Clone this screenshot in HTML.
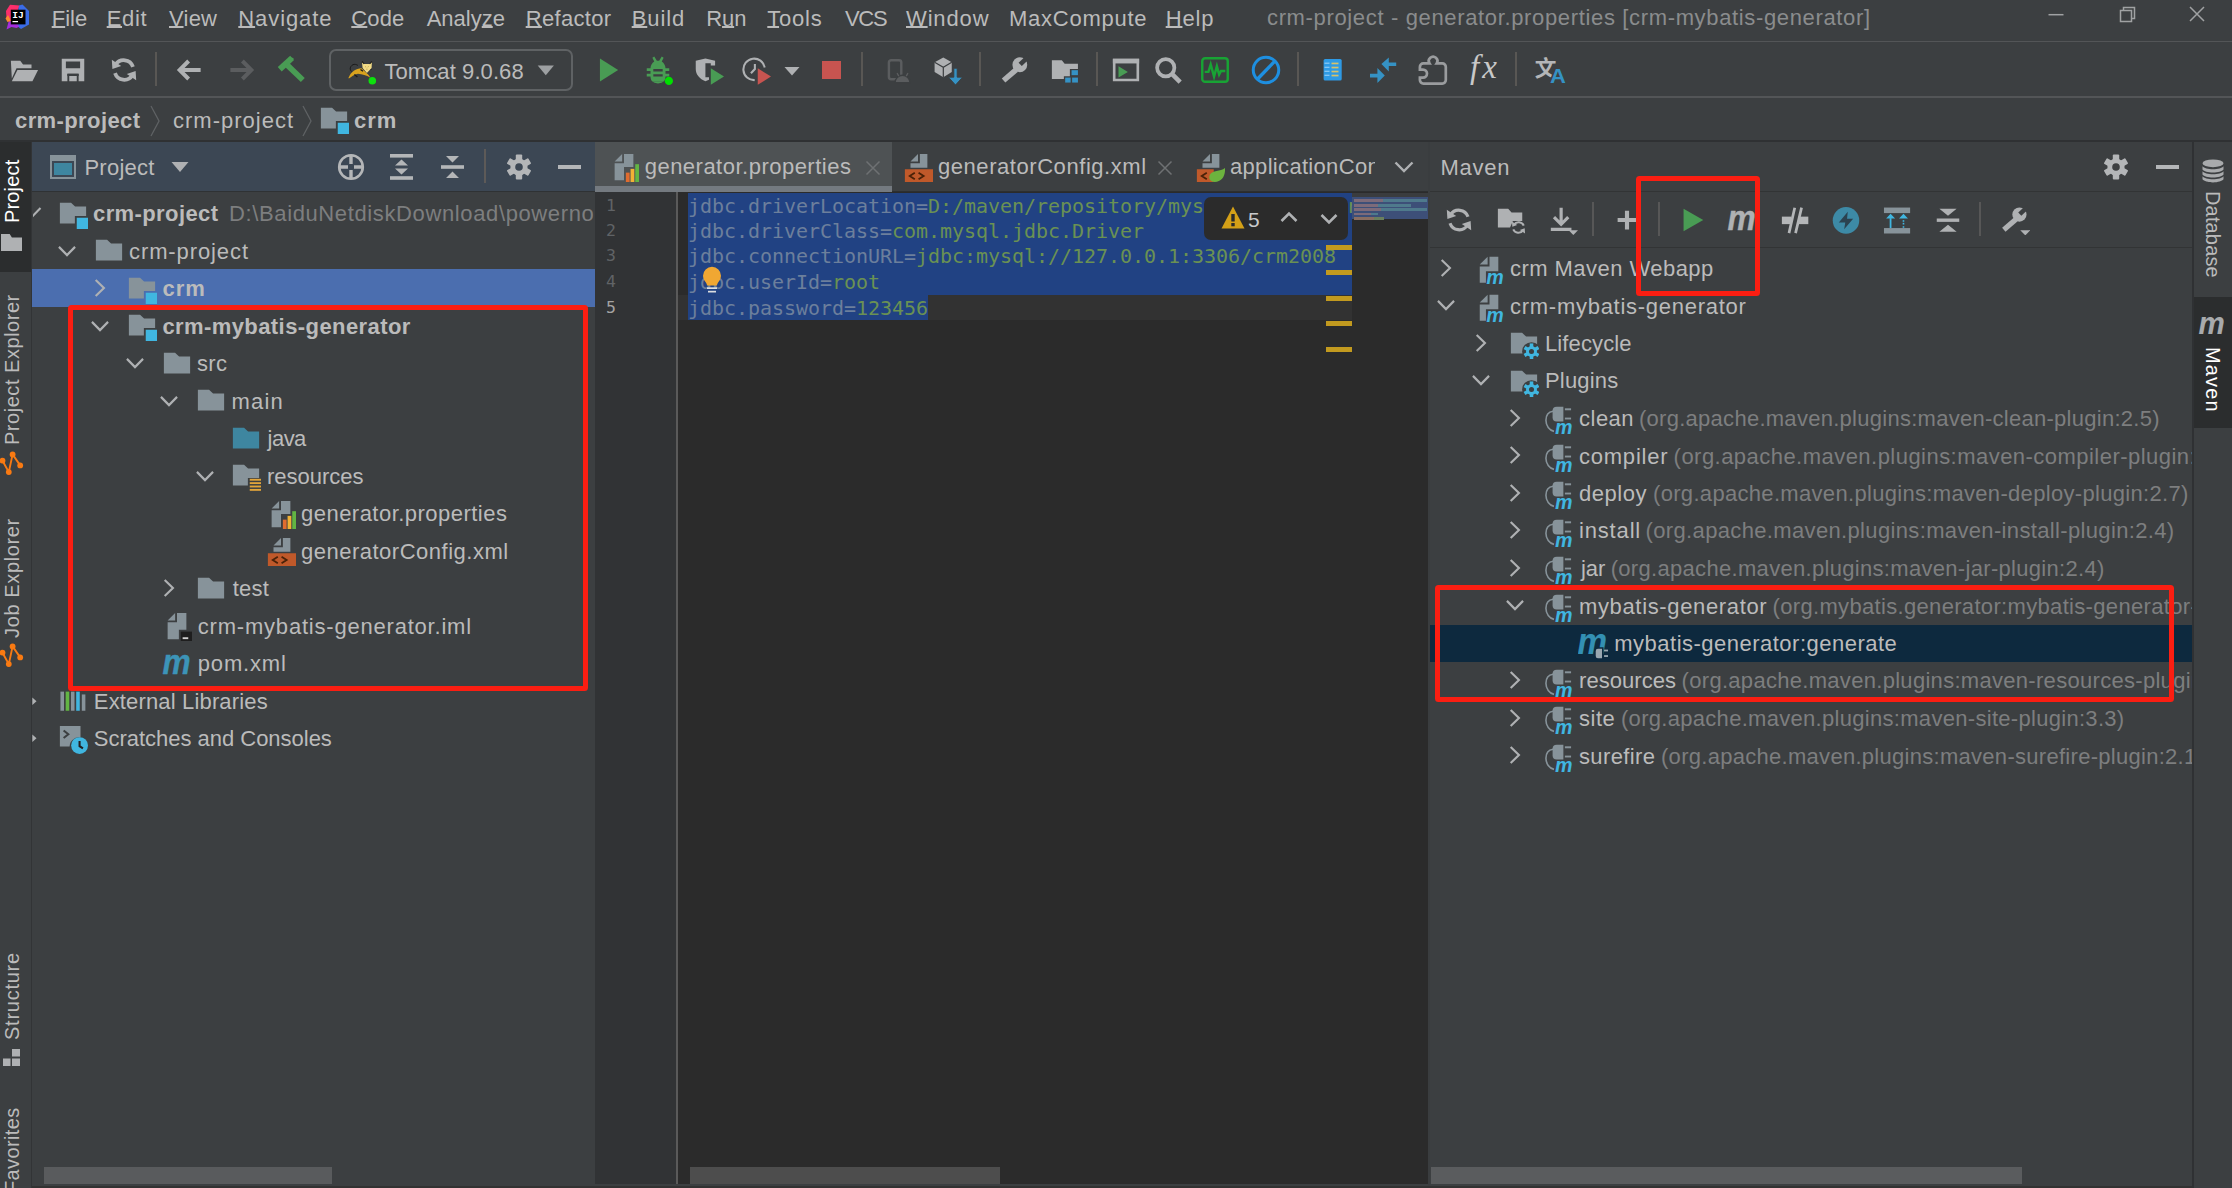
<!DOCTYPE html>
<html lang="en"><head><meta charset="utf-8"><title>crm-project - generator.properties [crm-mybatis-generator]</title><style>
html,body{margin:0;padding:0;background:#3c3f41;}
body{width:2232px;height:1188px;position:relative;overflow:hidden;font-family:"Liberation Sans","Noto Sans CJK SC",sans-serif;}
body>div,body>span,body>svg{position:absolute;}
.t{white-space:pre;line-height:30px;height:30px;}
.code{font-family:"DejaVu Sans Mono","Liberation Mono",monospace;font-size:20px;letter-spacing:-0.04px;transform-origin:0 22px;transform:scaleY(.935);}
.ln{font-family:"DejaVu Sans Mono","Liberation Mono",monospace;font-size:16.200px;transform-origin:0 22px;transform:scale(1.02,.97);}
u{text-decoration:underline;text-underline-offset:0.3px;text-decoration-thickness:1.5px;}
</style></head><body>
<div style="left:0px;top:0px;width:2232px;height:1188px;background:#3c3f41;"></div>
<div style="left:0px;top:40.5px;width:2232px;height:1.5px;background:#535557;"></div>
<div style="left:0px;top:96.3px;width:2232px;height:1.5px;background:#535557;"></div>
<div style="left:0px;top:140px;width:2232px;height:2px;background:#2f3133;"></div>
<svg style="left:5px;top:4px;" width="26" height="26" viewBox="0 0 26 26"><path d="M1 7L5 .800l9.500 .700-3 9-6 9.500-4-6z" fill="#fc2f6b"/><path d="M14 1.500L17.500 .500l6.500 6.500v13.500L16 25l-5-4z" fill="#3a6ce8"/><path d="M.500 14.500L3 11l3 6-3.500 1z" fill="#fb8a2e"/><path d="M3.500 18l5-2 6 6.500-3 1.500-5-1-5 2.500z" fill="#a42ddc"/>
<rect x="5.800" y="5.700" width="14.700" height="14.700" fill="#000"/><rect x="7.500" y="17" width="5.500" height="1.200" fill="#fff"/>
<text x="7.300" y="14.300" font-family="Liberation Mono,monospace" font-weight="bold" font-size="9.500" fill="#fff">IJ</text></svg>
<span id="t1" class="t" style="left:51.70px;top:4px;color:#bbbbbb;font-size:22px;"><u>F</u>ile</span>
<span id="t2" class="t" style="left:106.70px;top:4px;color:#bbbbbb;font-size:22px;letter-spacing:0.667px;"><u>E</u>dit</span>
<span id="t3" class="t" style="left:169.00px;top:4px;color:#bbbbbb;font-size:22px;letter-spacing:0.233px;"><u>V</u>iew</span>
<span id="t4" class="t" style="left:238.30px;top:4px;color:#bbbbbb;font-size:22px;letter-spacing:0.914px;"><u>N</u>avigate</span>
<span id="t5" class="t" style="left:351.30px;top:4px;color:#bbbbbb;font-size:22px;letter-spacing:0.133px;"><u>C</u>ode</span>
<span id="t6" class="t" style="left:426.70px;top:4px;color:#bbbbbb;font-size:22px;">Analy<u>z</u>e</span>
<span id="t7" class="t" style="left:525.70px;top:4px;color:#bbbbbb;font-size:22px;letter-spacing:0.329px;"><u>R</u>efactor</span>
<span id="t8" class="t" style="left:631.70px;top:4px;color:#bbbbbb;font-size:22px;letter-spacing:0.900px;"><u>B</u>uild</span>
<span id="t9" class="t" style="left:706.30px;top:4px;color:#bbbbbb;font-size:22px;letter-spacing:-0.150px;">R<u>u</u>n</span>
<span id="t10" class="t" style="left:767.30px;top:4px;color:#bbbbbb;font-size:22px;letter-spacing:0.750px;"><u>T</u>ools</span>
<span id="t11" class="t" style="left:845.00px;top:4px;color:#bbbbbb;font-size:22px;letter-spacing:-1.300px;">VCS</span>
<span id="t12" class="t" style="left:906.00px;top:4px;color:#bbbbbb;font-size:22px;letter-spacing:0.860px;"><u>W</u>indow</span>
<span id="t13" class="t" style="left:1009.00px;top:4px;color:#bbbbbb;font-size:22px;letter-spacing:0.744px;">MaxCompute</span>
<span id="t14" class="t" style="left:1165.70px;top:4px;color:#bbbbbb;font-size:22px;letter-spacing:0.867px;"><u>H</u>elp</span>
<span id="t15" class="t" style="left:1267.00px;top:3px;color:#8a8c8d;font-size:22px;letter-spacing:0.649px;">crm-project - generator.properties [crm-mybatis-generator]</span>
<svg style="left:2040px;top:0px;" width="180" height="36" viewBox="0 0 180 36"><path d="M8.500 14.700h15" stroke="#a0a2a3" stroke-width="1.500"/>
<path d="M80.500 10.500h11v11h-11zM83.500 10.500v-3h11v11h-3" stroke="#a0a2a3" stroke-width="1.500" fill="none"/>
<path d="M150 7l14 14M164 7l-14 14" stroke="#a0a2a3" stroke-width="1.500"/></svg>
<svg style="left:9.0px;top:55.0px;" width="30" height="30" viewBox="0 0 16 16"><path fill="#afb1b3" d="M1 3h5l1.500 2H12v2H4L1.500 12.500z"/><path fill="#afb1b3" d="M4.500 8H15.500L12.500 14H1.500z"/></svg>
<svg style="left:58.0px;top:55.0px;" width="30" height="30" viewBox="0 0 16 16"><path fill="#afb1b3" d="M2 2h12v12H2zM4.200 3.500v3.500h7.600V3.500zM5 10v4h6v-4z" fill-rule="evenodd"/><rect x="6" y="11.200" width="4" height="2.800" fill="#afb1b3"/><rect x="5" y="10" width="6" height="1.200" fill="#3c3f41"/></svg>
<svg style="left:109.0px;top:55.0px;" width="30" height="30" viewBox="0 0 16 16"><path d="M12.800 6.300A5.200 5.200 0 0 0 3.500 5.200M3.200 9.700A5.200 5.200 0 0 0 12.500 10.800" stroke="#afb1b3" stroke-width="2" fill="none"/><path fill="#afb1b3" d="M1.500 2.500l.3 5 4.700-1.600zM14.500 13.500l-.3-5-4.700 1.600z"/></svg>
<div style="left:155.4px;top:52px;width:2px;height:34px;background:#595754;"></div>
<svg style="left:174.0px;top:55.0px;" width="30" height="30" viewBox="0 0 16 16"><path d="M14.200 8H3M7.800 3.200L3 8l4.800 4.800" stroke="#afb1b3" stroke-width="2.100" fill="none"/></svg>
<svg style="left:227.0px;top:55.0px;" width="30" height="30" viewBox="0 0 16 16"><path d="M1.800 8H13M8.200 3.200L13 8l-4.800 4.800" stroke="#5b5d5f" stroke-width="2.100" fill="none"/></svg>
<svg style="left:276.0px;top:55.0px;" width="30" height="30" viewBox="0 0 16 16"><path d="M2 7.600L8.600 1.500" stroke="#499c54" stroke-width="3.100"/><path d="M6.700 1.200l2.800 .400-1 1.500z" fill="#499c54"/><path d="M5.600 5L14.300 13.300" stroke="#499c54" stroke-width="3"/></svg>
<div style="left:328.500px;top:48.500px;width:240px;height:38px;border:2px solid #5f6264;border-radius:7px;box-sizing:content-box"></div>
<svg style="left:347px;top:54px;" width="34" height="32" viewBox="0 0 34 32"><path d="M1.300 24.300C4 17.500 9 14.600 14.500 14.300L19.500 18.900C21.500 20.500 23.100 22.500 23.100 23.600C19.500 21.200 15.200 20 10.900 19.700C7.300 20.400 3.800 22.900 2.300 24.300z" fill="#d9a31e"/>
<path d="M4.500 17.500C2.500 15.500 2.800 12.500 5.900 10.700C7.500 10 9.500 10.500 10.900 11.400" stroke="#1a1a1a" stroke-width="1" fill="none"/>
<path d="M7.400 20.500l3 2.600M13.500 15.500l2.500 1.800M22.800 14.500l1.500 1.300" stroke="#1a1a1a" stroke-width="1.300" fill="none"/>
<path d="M14.900 7.500L17.400 10H22.400L24.900 7.500L24.600 13.900L19.900 18.900L15.600 13.900z" fill="#f3dc86"/>
<path d="M14.900 7.500L17.200 9.800M24.900 7.500L22.600 9.800" stroke="#1a1a1a" stroke-width="1.100"/>
<path d="M18 12.500l1.200 .600M21.800 12.500l-1.200 .600M19.900 14.500v1.500" stroke="#b59a45" stroke-width=".700"/>
<circle cx="25.300" cy="26.800" r="3.800" fill="#0de00d"/></svg>
<span id="t16" class="t" style="left:384.40px;top:57px;color:#bbbbbb;font-size:22px;letter-spacing:0.092px;">Tomcat 9.0.68</span>
<svg style="left:536px;top:63px;" width="20" height="14" viewBox="0 0 20 14"><path d="M1.700 2.400h16.200L9.800 12.200z" fill="#9da0a2"/></svg>
<svg style="left:592.5px;top:55.0px;" width="30" height="30" viewBox="0 0 16 16"><path fill="#499c54" d="M3.700 1.800L13.400 8L3.700 14.100z"/></svg>
<svg style="left:643.0px;top:55.0px;" width="30" height="30" viewBox="0 0 16 16"><path fill="#499c54" d="M5 1.500l1-.7L7.400 3h1.200L10 .8l1 .7-1 1.900c1.200.8 2 2.100 2 3.600H14v1.500h-2v1.500h2V11.500h-2c0 1-.3 1.800-.8 2.500H4.800C4.300 13.300 4 12.500 4 11.500H2V10h2V8.500H2V7h2c0-1.500.8-2.800 2-3.600zM5.500 7.500v1.300h5V7.500zM5.500 10.200v1.300h5v-1.300z" fill-rule="evenodd"/><path fill="#499c54" d="M4.800 14a3.800 2.500 0 0 0 6.400 0z"/><circle cx="13.800" cy="13.800" r="2.200" fill="#00e000"/></svg>
<svg style="left:694.0px;top:55.0px;" width="30" height="30" viewBox="0 0 16 16"><path fill="#afb1b3" d="M.930 3.070L6.090 1.920L11.250 3.070V5.550H8.950V4.400H6.090V11.860H8V13.200L6.090 14C3 12.800 .930 10.500 .930 7.500z"/><path fill="#499c54" d="M8.950 7.100L16 11.500L8.950 15.900z"/></svg>
<svg style="left:741.0px;top:55.0px;" width="30" height="30" viewBox="0 0 16 16"><path d="M12.650 6.650A5.730 5.730 0 1 0 7.300 13.380" stroke="#afb1b3" stroke-width="1.100" fill="none"/><path d="M7.400 4.800V7.460L5.300 9.750" stroke="#afb1b3" stroke-width="1.100" fill="none"/><path fill="#c75450" d="M8.930 7.100L16 11.500L8.930 15.900z"/></svg>
<svg style="left:784px;top:66px;" width="16" height="10" viewBox="0 0 16 10"><path d="M.500 1h15L8 9.500z" fill="#afb1b3"/></svg>
<div style="left:821.5px;top:60.6px;width:19px;height:18.8px;background:#c75450;"></div>
<div style="left:861.4px;top:52px;width:2px;height:34px;background:#595754;"></div>
<svg style="left:883.0px;top:55.0px;" width="30" height="30" viewBox="0 0 16 16"><rect x="3.150" y="2.750" width="6.600" height="10.200" rx="1.200" stroke="#5b5d5f" stroke-width="1.300" fill="none"/><path fill="#5b5d5f" stroke="#3c3f41" stroke-width=".700" d="M6.400 14.800a4 4 0 0 1 8 0z"/><path d="M7.500 9.700l.900 1.600M13.300 9.700l-.900 1.600" stroke="#5b5d5f" stroke-width=".700"/></svg>
<svg style="left:933.0px;top:55.0px;" width="30" height="30" viewBox="0 0 16 16"><path fill="#afb1b3" d="M5.500 1.280L10 3.900V9.100L5.500 11.800L.850 9.100V3.900z"/><path d="M.850 3.900L5.500 6.500L10 3.900M5.500 6.500V11.800" stroke="#3c3f41" stroke-width=".650" fill="none"/><path d="M11.100 7.040H12.900V11.800H15.800L12 16L8.200 11.800H11.100z" fill="#3592c4" stroke="#3c3f41" stroke-width=".500"/></svg>
<div style="left:979.4px;top:52px;width:2px;height:34px;background:#595754;"></div>
<svg style="left:999.0px;top:55.0px;" width="30" height="30" viewBox="0 0 16 16"><path d="M2.430 13.630L9.200 7.800" stroke="#afb1b3" stroke-width="2.900"/><circle cx="11.100" cy="5.200" r="3.950" fill="#afb1b3"/><path d="M11.300 5L15.800 .800" stroke="#3c3f41" stroke-width="2.500"/></svg>
<svg style="left:1050.0px;top:55.0px;" width="30" height="30" viewBox="0 0 16 16"><path fill="#afb1b3" d="M1 2.850H6.300L7.800 4.700H14.900V7.400H10.600V11.300H7.400V12.850H1z"/><g fill="#3592c4"><rect x="11.500" y="8.100" width="3.400" height="2.650"/><rect x="8.100" y="12.050" width="2.900" height="2.650"/><rect x="11.800" y="12.050" width="3.100" height="2.650"/></g></svg>
<div style="left:1096.4px;top:52px;width:2px;height:34px;background:#595754;"></div>
<svg style="left:1111.0px;top:55.0px;" width="30" height="30" viewBox="0 0 16 16"><path d="M1.700 2.700h12.600v10.600H1.700z" stroke="#afb1b3" stroke-width="1.400" fill="none"/><rect x="1" y="2" width="14" height="2.500" fill="#afb1b3"/><path fill="#499c54" d="M4 6l5 3-5 3z"/></svg>
<svg style="left:1153.0px;top:55.0px;" width="30" height="30" viewBox="0 0 16 16"><circle cx="6.800" cy="6.800" r="4.600" stroke="#afb1b3" stroke-width="2" fill="none"/><path d="M10.200 10.200L14.500 14.500" stroke="#afb1b3" stroke-width="2.400"/></svg>
<svg style="left:1200.0px;top:55.0px;" width="30" height="30" viewBox="0 0 16 16"><rect x="1.200" y="1.700" width="13.600" height="12.600" rx="1.500" stroke="#18a334" stroke-width="1.300" fill="none"/><path d="M2.500 9h2l1.200-4 1.800 6.500L9 6l1.200 4.500L11.200 8.500h2.300" stroke="#18a334" stroke-width="1.300" fill="none"/></svg>
<svg style="left:1251.0px;top:55.0px;" width="30" height="30" viewBox="0 0 16 16"><circle cx="8" cy="8" r="6.800" stroke="#1e8fe0" stroke-width="1.600" fill="none"/><path d="M3.500 12.800L12.600 3.400" stroke="#1e8fe0" stroke-width="1.800"/></svg>
<div style="left:1297.4px;top:52px;width:2px;height:34px;background:#595754;"></div>
<svg style="left:1322px;top:58px;" width="22" height="24" viewBox="0 0 22 24"><rect x="1.600" y="1.100" width="18.100" height="21.500" rx="1.500" fill="#2e9ae5"/><g fill="#d8c26a"><rect x="9.500" y="4.600" width="7" height="1.700"/><rect x="9.500" y="8.700" width="7" height="1.700"/><rect x="9.500" y="12.700" width="7" height="1.700"/><rect x="9.500" y="16.700" width="7" height="1.700"/></g><g fill="#8ecbf5"><rect x="2.500" y="4.600" width="5" height="1.200"/><rect x="2.500" y="8.700" width="5" height="1.200"/><rect x="2.500" y="12.700" width="5" height="1.200"/><rect x="2.500" y="16.700" width="5" height="1.200"/></g></svg>
<svg style="left:1367px;top:55px;" width="32" height="30" viewBox="0 0 32 30"><path d="M14.400 9.100L21.800 2.400V7.400H29.200V11.100H21.800V16.500z" fill="#3592c4"/><path d="M17.800 20.500L10.400 13.100V18.800H3V22.500H10.400V27.900z" fill="#3592c4"/></svg>
<svg style="left:1416px;top:53px;" width="34" height="33" viewBox="0 0 34 33"><path d="M7.400 10.400H13.500A4.300 4.300 0 1 1 20.700 10.400H26.300A3.500 3.500 0 0 1 29.800 13.900V27.100A3.500 3.500 0 0 1 26.300 30.600H7.400A3.500 3.500 0 0 1 3.900 27.100V24.600H7A4 4 0 1 0 7 16.600H3.900V13.900A3.500 3.500 0 0 1 7.400 10.400z" stroke="#9a9c9e" stroke-width="2.700" fill="none"/></svg>
<span id="t17" class="t" style="left:1470.00px;top:52px;color:#c8c8c8;font-size:33px;font-family:&quot;Liberation Serif&quot;,serif;font-style:italic;letter-spacing:3.000px;">fx</span>
<div style="left:1515.4px;top:52px;width:2px;height:34px;background:#595754;"></div>
<span id="t18" class="t" style="left:1534.70px;top:52px;color:#b4b6b8;font-size:21.7px;font-family:&quot;Noto Sans CJK SC&quot;,sans-serif;font-weight:bold;">文</span>
<span id="t19" class="t" style="left:1550.00px;top:61px;color:#3592c4;font-size:20px;font-weight:bold;transform:scaleX(1.100);transform-origin:0 0;text-shadow:1.500px 0 #3c3f41,-1.500px 0 #3c3f41,0 -1.500px #3c3f41,1px -1px #3c3f41,-1px -1px #3c3f41;">A</span>
<span id="t20" class="t" style="left:15.00px;top:106px;color:#bbbbbb;font-size:22px;font-weight:bold;letter-spacing:0.400px;">crm-project</span>
<svg style="left:148px;top:104px;" width="16" height="34" viewBox="0 0 16 34"><path d="M3 2l8 15-8 15" stroke="#5f6264" stroke-width="1.300" fill="none"/></svg>
<span id="t21" class="t" style="left:173.00px;top:106px;color:#bbbbbb;font-size:22px;letter-spacing:1.000px;">crm-project</span>
<svg style="left:300px;top:104px;" width="16" height="34" viewBox="0 0 16 34"><path d="M3 2l8 15-8 15" stroke="#5f6264" stroke-width="1.300" fill="none"/></svg>
<svg style="left:318.7px;top:104.2px;" width="30" height="30" viewBox="0 0 16 16"><path fill="#87939a" d="M1 2h5.97l2.14 2H15v5H9v4H1z"/><rect x="10" y="10" width="6" height="6" fill="#40b6e0"/></svg>
<span id="t22" class="t" style="left:354.00px;top:106px;color:#bbbbbb;font-size:22px;font-weight:bold;letter-spacing:1.000px;">crm</span>
<div style="left:0px;top:142px;width:31.5px;height:130px;background:#2b2d2e;"></div>
<div style="left:31px;top:142px;width:1px;height:1046px;background:#323436;"></div>
<span id="t23" class="t" style="left:-3.0px;top:223.00px;transform-origin:0 0;transform:rotate(-90deg);color:#ffffff;font-size:20px;letter-spacing:0.167px;">Project</span>
<svg style="left:1.3px;top:233.7px;" width="21" height="17" viewBox="0 0 21 17"><path fill="#afb1b3" d="M0 0h8.700l2.200 3.500H21V17H0z"/></svg>
<span id="t24" class="t" style="left:-3.0px;top:445.00px;transform-origin:0 0;transform:rotate(-90deg);color:#bbbbbb;font-size:20px;letter-spacing:0.533px;">Project Explorer</span>
<svg style="left:0px;top:440px;" width="26" height="40" viewBox="0 0 26 40"><path d="M2.5 20.7 L8.8 32.1 L12.6 14.4 L20.2 25.4" stroke="#f97a12" stroke-width="1.900" fill="none"/><circle cx="2.5" cy="20.7" r="2.900" fill="#f97a12"/><circle cx="8.8" cy="32.1" r="2.900" fill="#f97a12"/><circle cx="12.6" cy="14.4" r="2.900" fill="#f97a12"/><circle cx="20.2" cy="25.4" r="2.900" fill="#f97a12"/></svg>
<span id="t25" class="t" style="left:-3.0px;top:638.00px;transform-origin:0 0;transform:rotate(-90deg);color:#bbbbbb;font-size:20px;letter-spacing:0.636px;">Job Explorer</span>
<svg style="left:0px;top:632.3px;" width="26" height="40" viewBox="0 0 26 40"><path d="M2.5 20.7 L8.8 32.1 L12.6 14.4 L20.2 25.4" stroke="#f97a12" stroke-width="1.900" fill="none"/><circle cx="2.5" cy="20.7" r="2.900" fill="#f97a12"/><circle cx="8.8" cy="32.1" r="2.900" fill="#f97a12"/><circle cx="12.6" cy="14.4" r="2.900" fill="#f97a12"/><circle cx="20.2" cy="25.4" r="2.900" fill="#f97a12"/></svg>
<span id="t26" class="t" style="left:-3.0px;top:1040.00px;transform-origin:0 0;transform:rotate(-90deg);color:#bbbbbb;font-size:20px;letter-spacing:0.750px;">Structure</span>
<svg style="left:3px;top:1049px;" width="18" height="18" viewBox="0 0 18 18"><rect x="9" y="0" width="8" height="7.500" fill="#afb1b3"/><rect x="0" y="9.500" width="7.500" height="7.500" fill="#afb1b3"/><rect x="9" y="9.500" width="8" height="7.500" fill="#afb1b3"/></svg>
<span id="t27" class="t" style="left:-3.0px;top:1193.00px;transform-origin:0 0;transform:rotate(-90deg);color:#bbbbbb;font-size:20px;letter-spacing:0.375px;">Favorites</span>
<div style="left:32px;top:142px;width:563px;height:49px;background:#3c4754;"></div>
<div style="left:32px;top:190.5px;width:563px;height:1.5px;background:#2f3234;"></div>
<svg style="left:50px;top:155px;" width="26" height="24" viewBox="0 0 26 24"><rect x="0" y="0" width="26" height="24" fill="#87939a"/><rect x="2" y="6" width="22" height="16" fill="#3c4754"/><rect x="4" y="8" width="18" height="12" fill="#3e86a0"/></svg>
<span id="t28" class="t" style="left:84.40px;top:153px;color:#bbbbbb;font-size:22px;letter-spacing:0.267px;">Project</span>
<svg style="left:171px;top:161px;" width="18" height="12" viewBox="0 0 18 12"><path d="M.500 1h17L9 11z" fill="#afb1b3"/></svg>
<svg style="left:337px;top:153px;" width="28" height="28" viewBox="0 0 28 28"><circle cx="14" cy="14" r="11.800" stroke="#b4b6b8" stroke-width="2.600" fill="none"/><path d="M14 3v8M14 17v8M3 14h8M17 14h8" stroke="#b4b6b8" stroke-width="3.400"/></svg>
<svg style="left:390px;top:153px;" width="24" height="28" viewBox="0 0 24 28"><rect x="0" y="1" width="23" height="3.600" fill="#b4b6b8"/><rect x="0" y="23.200" width="23" height="3.600" fill="#b4b6b8"/><path d="M5 12.500h13L11.500 6.500zM5 15.500h13L11.500 21.500z" fill="#b4b6b8"/></svg>
<svg style="left:441px;top:153px;" width="24" height="28" viewBox="0 0 24 28"><rect x="0" y="12.200" width="23" height="3.600" fill="#b4b6b8"/><path d="M5 3h13L11.500 9.500zM5 25h13L11.500 18.500z" fill="#b4b6b8"/></svg>
<div style="left:484px;top:149px;width:1.5px;height:34px;background:#5d5a58;"></div>
<svg style="left:505px;top:153px;" width="28" height="28" viewBox="0 0 28 28"><g transform="translate(14 14)"><g fill="#b4b6b8"><circle r="8.600"/><rect x="-3.200" y="-12.400" width="6.400" height="7" rx="1" transform="rotate(0)"/><rect x="-3.200" y="-12.400" width="6.400" height="7" rx="1" transform="rotate(60)"/><rect x="-3.200" y="-12.400" width="6.400" height="7" rx="1" transform="rotate(120)"/><rect x="-3.200" y="-12.400" width="6.400" height="7" rx="1" transform="rotate(180)"/><rect x="-3.200" y="-12.400" width="6.400" height="7" rx="1" transform="rotate(240)"/><rect x="-3.200" y="-12.400" width="6.400" height="7" rx="1" transform="rotate(300)"/></g><circle r="3.800" fill="#3c4754"/></g></svg>
<div style="left:558px;top:164.8px;width:23px;height:4px;background:#b4b6b8;"></div>
<div style="left:32px;top:269px;width:563px;height:37.5px;background:#4b6eaf;"></div>
<svg style="left:33px;top:205px;" width="10" height="14" viewBox="0 0 10 14"><path d="M-1 11.800L7.500 3" stroke="#afb1b3" stroke-width="2.100" fill="none"/></svg>
<svg style="left:57.5px;top:198.65px;" width="30" height="30" viewBox="0 0 16 16"><path fill="#87939a" d="M1 2h5.97l2.14 2H15v5H9v4H1z"/><rect x="10" y="10" width="6" height="6" fill="#40b6e0"/></svg>
<span id="t29" class="t" style="left:93.00px;top:199px;color:#bbbbbb;font-size:22px;font-weight:bold;letter-spacing:0.400px;">crm-project</span>
<span id="t30" class="t" style="left:229.00px;top:199px;color:#7d7e7f;font-size:22px;width:365px;overflow:hidden;letter-spacing:0.623px;">D:\BaiduNetdiskDownload\powernode\crm</span>
<svg style="left:93.5px;top:236.15px;" width="30" height="30" viewBox="0 0 16 16"><path fill="#87939a" d="M1 2h5.97l2.14 2H15v9H1z"/></svg>
<svg style="left:51.5px;top:235.75px;" width="30" height="30" viewBox="0 0 16 16"><path d="M3.700 5.800l4.300 4.400 4.300-4.400" stroke="#afb1b3" stroke-width="1.150" fill="none"/></svg>
<span id="t31" class="t" style="left:129.00px;top:237px;color:#bbbbbb;font-size:22px;letter-spacing:0.900px;">crm-project</span>
<svg style="left:126.9px;top:273.65px;" width="30" height="30" viewBox="0 0 16 16"><path fill="#87939a" d="M1 2h5.97l2.14 2H15v5H9v4H1z"/><rect x="10" y="10" width="6" height="6" fill="#40b6e0"/></svg>
<svg style="left:84.9px;top:273.25px;" width="30" height="30" viewBox="0 0 16 16"><path d="M5.700 3.700l4.400 4.300-4.400 4.300" stroke="#afb1b3" stroke-width="1.150" fill="none"/></svg>
<span id="t32" class="t" style="left:162.40px;top:274px;color:#bbbbbb;font-size:22px;font-weight:bold;letter-spacing:1.050px;">crm</span>
<svg style="left:126.9px;top:311.15px;" width="30" height="30" viewBox="0 0 16 16"><path fill="#87939a" d="M1 2h5.97l2.14 2H15v5H9v4H1z"/><rect x="10" y="10" width="6" height="6" fill="#40b6e0"/></svg>
<svg style="left:84.9px;top:310.75px;" width="30" height="30" viewBox="0 0 16 16"><path d="M3.700 5.800l4.300 4.400 4.300-4.400" stroke="#afb1b3" stroke-width="1.150" fill="none"/></svg>
<span id="t33" class="t" style="left:162.40px;top:312px;color:#bbbbbb;font-size:22px;font-weight:bold;letter-spacing:0.415px;">crm-mybatis-generator</span>
<svg style="left:161.5px;top:348.65px;" width="30" height="30" viewBox="0 0 16 16"><path fill="#87939a" d="M1 2h5.97l2.14 2H15v9H1z"/></svg>
<svg style="left:119.5px;top:348.25px;" width="30" height="30" viewBox="0 0 16 16"><path d="M3.700 5.800l4.300 4.400 4.300-4.400" stroke="#afb1b3" stroke-width="1.150" fill="none"/></svg>
<span id="t34" class="t" style="left:197.00px;top:349px;color:#bbbbbb;font-size:22px;letter-spacing:0.300px;">src</span>
<svg style="left:196.0px;top:386.15px;" width="30" height="30" viewBox="0 0 16 16"><path fill="#87939a" d="M1 2h5.97l2.14 2H15v9H1z"/></svg>
<svg style="left:154.0px;top:385.75px;" width="30" height="30" viewBox="0 0 16 16"><path d="M3.700 5.800l4.300 4.400 4.300-4.400" stroke="#afb1b3" stroke-width="1.150" fill="none"/></svg>
<span id="t35" class="t" style="left:231.50px;top:387px;color:#bbbbbb;font-size:22px;letter-spacing:1.167px;">main</span>
<svg style="left:231.2px;top:423.65px;" width="30" height="30" viewBox="0 0 16 16"><path fill="#3e86a0" d="M1 2h5.97l2.14 2H15v9H1z"/></svg>
<span id="t36" class="t" style="left:267.60px;top:424px;color:#bbbbbb;font-size:22px;letter-spacing:-0.533px;">java</span>
<svg style="left:231.2px;top:461.15px;" width="30" height="30" viewBox="0 0 16 16"><path fill="#87939a" d="M1 2h5.97l2.14 2H15v5H9v4H1z"/><g fill="#e2a53a"><rect x="10" y="9.500" width="6.200" height="1"/><rect x="10" y="11.300" width="6.200" height="1"/><rect x="10" y="13.100" width="6.200" height="1"/><rect x="10" y="14.900" width="6.200" height="1"/></g></svg>
<svg style="left:189.5px;top:460.75px;" width="30" height="30" viewBox="0 0 16 16"><path d="M3.700 5.800l4.300 4.400 4.300-4.400" stroke="#afb1b3" stroke-width="1.150" fill="none"/></svg>
<span id="t37" class="t" style="left:267.00px;top:462px;color:#bbbbbb;font-size:22px;">resources</span>
<svg style="left:265.5px;top:498.65px;" width="30" height="30" viewBox="0 0 16 16"><path fill="#87939a" d="M7 1L3 5h4z"/><path fill="#87939a" d="M8 1v5H3v9h5V8h5V1z"/><rect x="9" y="11" width="2" height="5" fill="#e06c2f"/><rect x="11.5" y="9" width="2" height="7" fill="#f2b134"/><rect x="14" y="6.5" width="2" height="9.5" fill="#62b543"/></svg>
<span id="t38" class="t" style="left:301.00px;top:499px;color:#bbbbbb;font-size:22px;letter-spacing:0.474px;">generator.properties</span>
<svg style="left:265.5px;top:536.15px;" width="30" height="30" viewBox="0 0 16 16"><path fill="#87939a" d="M8 1L4 5h4z"/><path fill="#87939a" d="M9 1v5H4v2.400h9V1z"/><rect x="1" y="9.200" width="15.100" height="7" fill="#c0592a"/><path d="M6.300 11.100L3.600 12.800l2.700 1.700M8.300 11.100L11 12.800l-2.700 1.700" stroke="#4a2208" stroke-width=".95" fill="none"/></svg>
<span id="t39" class="t" style="left:301.00px;top:537px;color:#bbbbbb;font-size:22px;letter-spacing:0.500px;">generatorConfig.xml</span>
<svg style="left:196.2px;top:573.65px;" width="30" height="30" viewBox="0 0 16 16"><path fill="#87939a" d="M1 2h5.97l2.14 2H15v9H1z"/></svg>
<svg style="left:154.2px;top:573.25px;" width="30" height="30" viewBox="0 0 16 16"><path d="M5.700 3.700l4.400 4.300-4.400 4.300" stroke="#afb1b3" stroke-width="1.150" fill="none"/></svg>
<span id="t40" class="t" style="left:232.70px;top:574px;color:#bbbbbb;font-size:22px;letter-spacing:0.267px;">test</span>
<svg style="left:162.3px;top:611.15px;" width="30" height="30" viewBox="0 0 16 16"><path fill="#87939a" d="M7 1L3 5h4z"/><path fill="#87939a" d="M8 1v5H3v9h6v-5h4V1z"/><rect x="10" y="11" width="6" height="5" fill="#1e1e1e"/><rect x="11" y="14" width="3" height="1" fill="#d0d0d0"/></svg>
<span id="t41" class="t" style="left:197.80px;top:612px;color:#bbbbbb;font-size:22px;letter-spacing:0.792px;">crm-mybatis-generator.iml</span>
<svg style="left:162.3px;top:648.65px;" width="30" height="30" viewBox="0 0 16 16"><g transform="translate(0 0) scale(1)"><text x=".300" y="13.100" font-family="Liberation Sans,sans-serif" font-weight="bold" font-style="italic" font-size="18.300" textLength="15" lengthAdjust="spacingAndGlyphs" fill="#3c94b8" stroke="#3c94b8" stroke-width="0.22">m</text></g></svg>
<span id="t42" class="t" style="left:197.80px;top:649px;color:#bbbbbb;font-size:22px;letter-spacing:0.833px;">pom.xml</span>
<svg style="left:58.3px;top:686.15px;" width="30" height="30" viewBox="0 0 16 16"><rect x="1.300" y="3" width="1.900" height="10.200" fill="#87939a"/><rect x="4.100" y="3" width="1.900" height="10.200" fill="#62b543"/><rect x="6.900" y="3" width="1.900" height="10.200" fill="#87939a"/><rect x="9.700" y="3" width="1.900" height="10.200" fill="#40b6e0"/><rect x="12.700" y="4.500" width="1.900" height="8.700" fill="#87939a"/></svg>
<span id="t43" class="t" style="left:93.80px;top:687px;color:#bbbbbb;font-size:22px;letter-spacing:0.159px;">External Libraries</span>
<svg style="left:58.3px;top:723.65px;" width="30" height="30" viewBox="0 0 16 16"><path fill="#87939a" d="M1 1h11v6.200A5 5 0 0 0 6.200 12H1z"/><path d="M3 3.5l2.500 2L3 7.500" stroke="#3c3f41" stroke-width="1.1" fill="none"/><circle cx="11.500" cy="11.500" r="4.500" fill="#40b6e0"/><path d="M11.500 9v2.800l1.800 1.200" stroke="#231f20" stroke-width="1.1" fill="none"/></svg>
<span id="t44" class="t" style="left:93.80px;top:724px;color:#bbbbbb;font-size:22px;letter-spacing:-0.019px;">Scratches and Consoles</span>
<svg style="left:31.5px;top:696.55px;" width="5" height="9" viewBox="0 0 5 9"><path d="M.300 .500l4.200 3.700-4.200 3.700z" fill="#afb1b3"/></svg>
<svg style="left:31.5px;top:734.05px;" width="5" height="9" viewBox="0 0 5 9"><path d="M.300 .500l4.200 3.700-4.200 3.700z" fill="#afb1b3"/></svg>
<div style="left:68.300px;top:305.200px;width:509.800px;height:375.800px;border:5px solid #fb1e12;border-radius:3.500px;box-sizing:content-box"></div>
<div style="left:44px;top:1167px;width:288px;height:17px;background:#595b5d;"></div>
<div style="left:595px;top:142px;width:833px;height:50px;background:#3c3f41;"></div>
<div style="left:595px;top:142px;width:297px;height:50px;background:#4e5254;"></div>
<div style="left:595px;top:185.9px;width:297px;height:6.9px;background:#747a80;"></div>
<div style="left:892px;top:191.2px;width:536px;height:1.6px;background:#2d2f30;"></div>
<svg style="left:609px;top:152px;" width="30" height="30" viewBox="0 0 16 16"><path fill="#87939a" d="M7 1L3 5h4z"/><path fill="#87939a" d="M8 1v5H3v9h5V8h5V1z"/><rect x="9" y="11" width="2" height="5" fill="#e06c2f"/><rect x="11.5" y="9" width="2" height="7" fill="#f2b134"/><rect x="14" y="6.5" width="2" height="9.5" fill="#62b543"/></svg>
<span id="t45" class="t" style="left:644.70px;top:152px;color:#bbbbbb;font-size:22px;letter-spacing:0.489px;">generator.properties</span>
<svg style="left:865px;top:160px;" width="16" height="16" viewBox="0 0 16 16"><path d="M1.500 1.500l13 13M14.500 1.500l-13 13" stroke="#6e7173" stroke-width="1.500"/></svg>
<svg style="left:903px;top:152px;" width="30" height="30" viewBox="0 0 16 16"><path fill="#87939a" d="M8 1L4 5h4z"/><path fill="#87939a" d="M9 1v5H4v2.400h9V1z"/><rect x="1" y="9.200" width="15.100" height="7" fill="#c0592a"/><path d="M6.300 11.100L3.600 12.800l2.700 1.700M8.300 11.100L11 12.800l-2.700 1.700" stroke="#4a2208" stroke-width=".95" fill="none"/></svg>
<span id="t46" class="t" style="left:938.00px;top:152px;color:#bbbbbb;font-size:22px;letter-spacing:0.556px;">generatorConfig.xml</span>
<svg style="left:1157px;top:160px;" width="16" height="16" viewBox="0 0 16 16"><path d="M1.500 1.500l13 13M14.500 1.500l-13 13" stroke="#6e7173" stroke-width="1.500"/></svg>
<svg style="left:1195px;top:152px;" width="30" height="30" viewBox="0 0 16 16"><path fill="#87939a" d="M8 1L4 5h4z"/><path fill="#87939a" d="M9 1v5H4v2.400h9V1z"/><rect x="1" y="9.200" width="9" height="7" fill="#c0592a"/><path d="M6.300 11.100L3.600 12.800l2.700 1.700" stroke="#4a2208" stroke-width=".95" fill="none"/><path fill="#6cb33e" d="M16 8.5c.3 4-1.5 7.5-5.5 7.5-2.5 0-3.5-2-2.5-4 1.2-2.4 5.5-1.500 8-3.500z"/></svg>
<span id="t47" class="t" style="left:1230.00px;top:152px;color:#bbbbbb;font-size:22px;width:144.500px;overflow:hidden;letter-spacing:0.317px;">applicationContext-datasource.xml</span>
<svg style="left:1394px;top:159px;" width="20" height="16" viewBox="0 0 20 16"><path d="M1.500 3.500l8.500 8.500 8.500-8.500" stroke="#afb1b3" stroke-width="2.400" fill="none"/></svg>
<div style="left:595px;top:192px;width:833px;height:992px;background:#2b2b2b;"></div>
<div style="left:595px;top:192px;width:82px;height:992px;background:#313335;"></div>
<div style="left:676.3px;top:192px;width:1.5px;height:992px;background:#5a5a5a;"></div>
<div style="left:678px;top:294.5px;width:674px;height:25.5px;background:#323232;"></div>
<div style="left:688px;top:192.8px;width:664px;height:102.19999999999999px;background:#214283;"></div>
<div style="left:688px;top:294.5px;width:240px;height:25.5px;background:#214283;"></div>
<span class="t ln" style="left:605.600px;top:191.2px;color:#606366">1</span>
<span class="t code" style="left:688px;top:190.9px;width:664px;overflow:hidden;"><span style="color:#6c7f9c">jdbc.driverLocation=</span><span style="color:#6a9153">D:/maven/repository/mysql/mysql-connector-java/5.1.43/mysql-connector-java-5.1.43.jar</span></span>
<span class="t ln" style="left:605.600px;top:216.2px;color:#606366">2</span>
<span class="t code" style="left:688px;top:215.9px;"><span style="color:#6c7f9c">jdbc.driverClass=</span><span style="color:#6a9153">com.mysql.jdbc.Driver</span></span>
<span class="t ln" style="left:605.600px;top:241.2px;color:#606366">3</span>
<span class="t code" style="left:688px;top:240.9px;"><span style="color:#6c7f9c">jdbc.connectionURL=</span><span style="color:#6a9153">jdbc:mysql://127.0.0.1:3306/crm2008</span></span>
<span class="t ln" style="left:605.600px;top:267.2px;color:#606366">4</span>
<span class="t code" style="left:688px;top:266.9px;"><span style="color:#6c7f9c">jdbc.userId=</span><span style="color:#6a9153">root</span></span>
<span class="t ln" style="left:605.600px;top:293.2px;color:#a4a3a3">5</span>
<span class="t code" style="left:688px;top:292.9px;"><span style="color:#6c7f9c">jdbc.password=</span><span style="color:#6a9153">123456</span></span>
<div style="left:1352px;top:192px;width:76px;height:992px;background:#2b2b2b;"></div>
<div style="left:1352px;top:193px;width:76px;height:4px;background:#3a3c3e;"></div>
<div style="left:1352px;top:197px;width:76px;height:22px;background:#3d4f78;"></div>
<div style="left:1354px;top:199.4px;width:29px;height:2.8px;background:#7d6b7a;"></div>
<div style="left:1383px;top:199.4px;width:44px;height:2.8px;background:#4f7a8c;"></div>
<div style="left:1354px;top:203.8px;width:24px;height:2.8px;background:#7d6b7a;"></div>
<div style="left:1378px;top:203.8px;width:32.5px;height:2.8px;background:#4f7a8c;"></div>
<div style="left:1354px;top:208.20000000000002px;width:27px;height:2.8px;background:#7d6b7a;"></div>
<div style="left:1381px;top:208.20000000000002px;width:46px;height:2.8px;background:#4f7a8c;"></div>
<div style="left:1354px;top:212.6px;width:17px;height:2.8px;background:#7d6b7a;"></div>
<div style="left:1371px;top:212.6px;width:7px;height:2.8px;background:#4f7a8c;"></div>
<div style="left:1354px;top:217.0px;width:20px;height:2.8px;background:#8a6e62;"></div>
<div style="left:1374px;top:217.0px;width:10px;height:2.8px;background:#6a7f5e;"></div>
<div style="left:1326px;top:245.3px;width:26px;height:5px;background:#c29a1f;"></div>
<div style="left:1326px;top:270.0px;width:26px;height:5px;background:#c29a1f;"></div>
<div style="left:1326px;top:295.5px;width:26px;height:5px;background:#c29a1f;"></div>
<div style="left:1326px;top:321.0px;width:26px;height:5px;background:#c29a1f;"></div>
<div style="left:1326px;top:346.5px;width:26px;height:5px;background:#c29a1f;"></div>
<div style="left:1204px;top:197px;width:144px;height:43px;background:#2b2b2b;border-radius:7px"></div>
<svg style="left:1221px;top:206px;" width="24" height="23" viewBox="0 0 24 23"><path d="M12 .500L23.500 22.500H.500z" fill="#d4a017"/><rect x="10.300" y="8" width="3.400" height="7.500" fill="#2b2b2b"/><rect x="10.300" y="17" width="3.400" height="3.300" fill="#2b2b2b"/></svg>
<span id="t48" class="t" style="left:1248.00px;top:205px;color:#c8cacc;font-size:21px;">5</span>
<svg style="left:1279px;top:209px;" width="20" height="16" viewBox="0 0 20 16"><path d="M2.500 12l7.500-7.500 7.500 7.500" stroke="#afb1b3" stroke-width="2.600" fill="none"/></svg>
<svg style="left:1319px;top:210.5px;" width="20" height="16" viewBox="0 0 20 16"><path d="M2.500 4l7.500 7.500 7.500-7.500" stroke="#afb1b3" stroke-width="2.600" fill="none"/></svg>
<svg style="left:700px;top:264px;" width="24" height="32" viewBox="0 0 24 32"><path d="M12 2.800a9 9 0 0 1 9 9c0 3.500-2 5.500-3.200 7.200-.8 1.200-.8 2.500-.8 2.500H7s0-1.300-.8-2.500C5 17.300 3 15.300 3 11.800a9 9 0 0 1 9-9z" fill="#f0a732"/><rect x="7" y="23.300" width="10" height="1.700" fill="#dcdee0"/><rect x="8" y="26.800" width="8" height="1.700" fill="#dcdee0"/></svg>
<div style="left:690px;top:1167px;width:310px;height:16.5px;background:#4d4d4d;"></div>
<div style="left:1428px;top:142px;width:2px;height:1046px;background:#3a3d3f;"></div>
<div style="left:1430px;top:142px;width:762px;height:49px;background:#3c3f41;"></div>
<div style="left:1430px;top:190.5px;width:762px;height:1.5px;background:#323435;"></div>
<span id="t49" class="t" style="left:1440.40px;top:153px;color:#bbbbbb;font-size:22px;letter-spacing:0.750px;">Maven</span>
<svg style="left:2102px;top:153px;" width="28" height="28" viewBox="0 0 28 28"><g transform="translate(14 14)"><g fill="#b4b6b8"><circle r="8.600"/><rect x="-3.200" y="-12.400" width="6.400" height="7" rx="1" transform="rotate(0)"/><rect x="-3.200" y="-12.400" width="6.400" height="7" rx="1" transform="rotate(60)"/><rect x="-3.200" y="-12.400" width="6.400" height="7" rx="1" transform="rotate(120)"/><rect x="-3.200" y="-12.400" width="6.400" height="7" rx="1" transform="rotate(180)"/><rect x="-3.200" y="-12.400" width="6.400" height="7" rx="1" transform="rotate(240)"/><rect x="-3.200" y="-12.400" width="6.400" height="7" rx="1" transform="rotate(300)"/></g><circle r="3.800" fill="#3c3f41"/></g></svg>
<div style="left:2156px;top:164.8px;width:23px;height:4px;background:#b4b6b8;"></div>
<svg style="left:1444.0px;top:204.5px;" width="30" height="30" viewBox="0 0 16 16"><path d="M12.800 6.300A5.200 5.200 0 0 0 3.500 5.200M3.200 9.700A5.200 5.200 0 0 0 12.500 10.800" stroke="#afb1b3" stroke-width="1.700" fill="none"/><path fill="#afb1b3" d="M1.500 2.500l.3 5 4.700-1.600zM14.500 13.500l-.3-5-4.700 1.600z"/></svg>
<svg style="left:1496.0px;top:204.5px;" width="30" height="30" viewBox="0 0 16 16"><path fill="#afb1b3" d="M1 2h5.500l1.800 2H14v4.500H9L7.500 12H1z"/><path d="M14.800 11A3 3 0 0 0 9.600 10.500M9.200 13A3 3 0 0 0 14.400 13.500" stroke="#afb1b3" stroke-width="1.100" fill="none"/><path fill="#afb1b3" d="M8.500 8.800l.2 2.800 2.600-.9zM15.500 15.200l-.2-2.800-2.600.9z"/></svg>
<svg style="left:1548.0px;top:204.5px;" width="30" height="30" viewBox="0 0 16 16"><path d="M7 1.500v8M3.200 6.500L7 10.300l3.800-3.800M1.500 13h11" stroke="#afb1b3" stroke-width="1.700" fill="none"/><path d="M11 13.500h5L13.500 16z" fill="#afb1b3"/></svg>
<div style="left:1592.3px;top:202px;width:1.8px;height:34px;background:#575757;"></div>
<svg style="left:1612.0px;top:204.5px;" width="30" height="30" viewBox="0 0 16 16"><path d="M8 3v10M3 8h10" stroke="#afb1b3" stroke-width="2.200"/></svg>
<div style="left:1658.3px;top:202px;width:1.8px;height:34px;background:#575757;"></div>
<svg style="left:1677.0px;top:204.5px;" width="30" height="30" viewBox="0 0 16 16"><path fill="#499c54" d="M3.500 2l10.500 6-10.500 6z"/></svg>
<svg style="left:1727.0px;top:204.5px;" width="30" height="30" viewBox="0 0 16 16"><g transform="translate(0 0) scale(1)"><text x=".300" y="13.100" font-family="Liberation Sans,sans-serif" font-weight="bold" font-style="italic" font-size="18.300" textLength="15" lengthAdjust="spacingAndGlyphs" fill="#afb1b3" stroke="#afb1b3" stroke-width="0.22">m</text></g></svg>
<svg style="left:1780.0px;top:204.5px;" width="30" height="30" viewBox="0 0 16 16"><rect x="1" y="6.200" width="5.100" height="4" fill="#b4b6b8"/><rect x="10" y="6.200" width="5.100" height="4" fill="#b4b6b8"/><path d="M4.800 15L7.860 1.430M8.300 15L11.500 1.430" stroke="#b4b6b8" stroke-width="1.450" fill="none"/></svg>
<svg style="left:1831.0px;top:204.5px;" width="30" height="30" viewBox="0 0 16 16"><circle cx="8" cy="8.200" r="7.070" fill="#3d8aa6"/><path d="M8.940 3.540L4.170 9.270H7.600L7.030 12.900L11.800 7.360H8.560z" fill="#2b4250"/></svg>
<svg style="left:1882.0px;top:204.5px;" width="30" height="30" viewBox="0 0 16 16"><rect x="1.050" y="1.360" width="13.950" height="2.950" fill="#87939a"/><rect x="1.050" y="12.300" width="13.950" height="2.900" fill="#87939a"/><path d="M4.570 12.300V7" stroke="#40b6e0" stroke-width=".950"/><path d="M2.200 7.170H6.980L4.570 4.680zM9.080 7.170H13.860L11.450 4.680z" fill="#40b6e0"/><rect x="11.030" y="8.100" width=".850" height=".850" fill="#40b6e0"/><rect x="11.030" y="9.500" width=".850" height=".900" fill="#40b6e0"/><rect x="11.030" y="11.300" width=".850" height=".850" fill="#40b6e0"/></svg>
<svg style="left:1933.0px;top:204.5px;" width="30" height="30" viewBox="0 0 16 16"><rect x="2" y="7.200" width="12" height="1.800" fill="#afb1b3"/><path d="M3.400 2h9.200L8 5.700zM3.400 14.200h9.200L8 10.500z" fill="#afb1b3"/></svg>
<div style="left:1979.3px;top:202px;width:1.8px;height:34px;background:#575757;"></div>
<svg style="left:1999.5px;top:204.5px;" width="30" height="30" viewBox="0 0 16 16"><g transform="translate(-.300 .100) scale(.960)"><path d="M2.430 13.630L9.200 7.800" stroke="#afb1b3" stroke-width="2.900"/><circle cx="11.100" cy="5.200" r="3.950" fill="#afb1b3"/><path d="M11.300 5L15.800 .800" stroke="#3c3f41" stroke-width="2.500"/></g><path d="M10.800 13.400h5.400L13.500 16.200z" fill="#afb1b3"/></svg>
<div style="left:1430px;top:246.5px;width:762px;height:1.5px;background:#323435;"></div>
<div style="left:1430px;top:624.5px;width:762px;height:37px;background:#0d293e;"></div>
<svg style="left:1476.0px;top:254.0px;" width="30" height="30" viewBox="0 0 16 16"><path fill="#87939a" d="M6.200 1.400L2 5.600h4.200z"/><path fill="#87939a" d="M7.200 1.400v5.200H2v8.700h3.300V9.200H11.900V1.400z"/><g transform="translate(5.3 8.3) scale(0.62)"><text x=".300" y="13.100" font-family="Liberation Sans,sans-serif" font-weight="bold" font-style="italic" font-size="18.300" textLength="15" lengthAdjust="spacingAndGlyphs" fill="#40b6e0">m</text></g></svg>
<svg style="left:1431.3px;top:252.5px;" width="30" height="30" viewBox="0 0 16 16"><path d="M5.700 3.700l4.400 4.300-4.400 4.300" stroke="#afb1b3" stroke-width="1.150" fill="none"/></svg>
<span id="t50" class="t" style="left:1510.00px;top:254px;color:#bbbbbb;font-size:22px;letter-spacing:0.453px;">crm Maven Webapp</span>
<svg style="left:1476.0px;top:291.5px;" width="30" height="30" viewBox="0 0 16 16"><path fill="#87939a" d="M6.200 1.400L2 5.600h4.200z"/><path fill="#87939a" d="M7.200 1.400v5.200H2v8.700h3.300V9.200H11.900V1.400z"/><g transform="translate(5.3 8.3) scale(0.62)"><text x=".300" y="13.100" font-family="Liberation Sans,sans-serif" font-weight="bold" font-style="italic" font-size="18.300" textLength="15" lengthAdjust="spacingAndGlyphs" fill="#40b6e0">m</text></g></svg>
<svg style="left:1431.3px;top:290.0px;" width="30" height="30" viewBox="0 0 16 16"><path d="M3.700 5.800l4.300 4.400 4.300-4.400" stroke="#afb1b3" stroke-width="1.150" fill="none"/></svg>
<span id="t51" class="t" style="left:1510.00px;top:292px;color:#bbbbbb;font-size:22px;letter-spacing:0.730px;">crm-mybatis-generator</span>
<svg style="left:1509.1px;top:329.0px;" width="30" height="30" viewBox="0 0 16 16"><path fill="#87939a" d="M1 2h5.970l2.140 2H15v9H1z"/><g transform="translate(12 12)"><circle r="5" fill="#3c3f41"/><g fill="#40b6e0"><circle r="2.900"/><rect x="-.950" y="-4.300" width="1.900" height="2.400" transform="rotate(0)"/><rect x="-.950" y="-4.300" width="1.900" height="2.400" transform="rotate(60)"/><rect x="-.950" y="-4.300" width="1.900" height="2.400" transform="rotate(120)"/><rect x="-.950" y="-4.300" width="1.900" height="2.400" transform="rotate(180)"/><rect x="-.950" y="-4.300" width="1.900" height="2.400" transform="rotate(240)"/><rect x="-.950" y="-4.300" width="1.900" height="2.400" transform="rotate(300)"/></g><circle r="1.350" fill="#3c3f41"/></g></svg>
<svg style="left:1466.3px;top:327.5px;" width="30" height="30" viewBox="0 0 16 16"><path d="M5.700 3.700l4.400 4.300-4.400 4.300" stroke="#afb1b3" stroke-width="1.150" fill="none"/></svg>
<span id="t52" class="t" style="left:1545.00px;top:329px;color:#bbbbbb;font-size:22px;letter-spacing:0.125px;">Lifecycle</span>
<svg style="left:1509.1px;top:366.5px;" width="30" height="30" viewBox="0 0 16 16"><path fill="#87939a" d="M1 2h5.970l2.140 2H15v9H1z"/><g transform="translate(12 12)"><circle r="5" fill="#3c3f41"/><g fill="#40b6e0"><circle r="2.900"/><rect x="-.950" y="-4.300" width="1.900" height="2.400" transform="rotate(0)"/><rect x="-.950" y="-4.300" width="1.900" height="2.400" transform="rotate(60)"/><rect x="-.950" y="-4.300" width="1.900" height="2.400" transform="rotate(120)"/><rect x="-.950" y="-4.300" width="1.900" height="2.400" transform="rotate(180)"/><rect x="-.950" y="-4.300" width="1.900" height="2.400" transform="rotate(240)"/><rect x="-.950" y="-4.300" width="1.900" height="2.400" transform="rotate(300)"/></g><circle r="1.350" fill="#3c3f41"/></g></svg>
<svg style="left:1466.3px;top:365.0px;" width="30" height="30" viewBox="0 0 16 16"><path d="M3.700 5.800l4.300 4.400 4.300-4.400" stroke="#afb1b3" stroke-width="1.150" fill="none"/></svg>
<span id="t53" class="t" style="left:1545.00px;top:366px;color:#bbbbbb;font-size:22px;letter-spacing:0.167px;">Plugins</span>
<svg style="left:1545.0px;top:404.0px;" width="30" height="30" viewBox="0 0 16 16"><path d="M4.300 3.900C1.600 4.300 .500 6.500 .500 8.700C.500 11.600 2.300 14 4.800 14.600" stroke="#87939a" stroke-width=".850" fill="none"/><path fill="#87939a" d="M6.200 1.400H9.800V9.300H6.200Q4.050 9.300 4.050 7.200V3.500Q4.050 1.400 6.200 1.400z"/><rect x="10.600" y="2.300" width="3.300" height="1.050" fill="#87939a"/><rect x="10.600" y="7.250" width="3.300" height="1" fill="#87939a"/><g transform="translate(5.2 8.4) scale(0.62)"><text x=".300" y="13.100" font-family="Liberation Sans,sans-serif" font-weight="bold" font-style="italic" font-size="18.300" textLength="15" lengthAdjust="spacingAndGlyphs" fill="#40b6e0" stroke="#40b6e0" stroke-width="0.06">m</text></g></svg>
<svg style="left:1500.3px;top:402.5px;" width="30" height="30" viewBox="0 0 16 16"><path d="M5.700 3.700l4.400 4.300-4.400 4.300" stroke="#afb1b3" stroke-width="1.150" fill="none"/></svg>
<span id="t54" class="t" style="left:1579.00px;top:404px;color:#bbbbbb;font-size:22px;letter-spacing:0.500px;">clean</span>
<span id="t55" class="t" style="left:1639.00px;top:404px;color:#7d7e7f;font-size:22px;letter-spacing:0.271px;">(org.apache.maven.plugins:maven-clean-plugin:2.5)</span>
<svg style="left:1545.0px;top:441.5px;" width="30" height="30" viewBox="0 0 16 16"><path d="M4.300 3.900C1.600 4.300 .500 6.500 .500 8.700C.500 11.600 2.300 14 4.800 14.600" stroke="#87939a" stroke-width=".850" fill="none"/><path fill="#87939a" d="M6.200 1.400H9.800V9.300H6.200Q4.050 9.300 4.050 7.200V3.500Q4.050 1.400 6.200 1.400z"/><rect x="10.600" y="2.300" width="3.300" height="1.050" fill="#87939a"/><rect x="10.600" y="7.250" width="3.300" height="1" fill="#87939a"/><g transform="translate(5.2 8.4) scale(0.62)"><text x=".300" y="13.100" font-family="Liberation Sans,sans-serif" font-weight="bold" font-style="italic" font-size="18.300" textLength="15" lengthAdjust="spacingAndGlyphs" fill="#40b6e0" stroke="#40b6e0" stroke-width="0.06">m</text></g></svg>
<svg style="left:1500.3px;top:440.0px;" width="30" height="30" viewBox="0 0 16 16"><path d="M5.700 3.700l4.400 4.300-4.400 4.300" stroke="#afb1b3" stroke-width="1.150" fill="none"/></svg>
<span id="t56" class="t" style="left:1579.00px;top:442px;color:#bbbbbb;font-size:22px;letter-spacing:0.771px;">compiler</span>
<span id="t57" class="t" style="left:1673.60px;top:442px;color:#7d7e7f;font-size:22px;width:518.4000000000001px;overflow:hidden;letter-spacing:0.465px;">(org.apache.maven.plugins:maven-compiler-plugin:3.1)</span>
<svg style="left:1545.0px;top:479.0px;" width="30" height="30" viewBox="0 0 16 16"><path d="M4.300 3.900C1.600 4.300 .500 6.500 .500 8.700C.500 11.600 2.300 14 4.800 14.600" stroke="#87939a" stroke-width=".850" fill="none"/><path fill="#87939a" d="M6.200 1.400H9.800V9.300H6.200Q4.050 9.300 4.050 7.200V3.500Q4.050 1.400 6.200 1.400z"/><rect x="10.600" y="2.300" width="3.300" height="1.050" fill="#87939a"/><rect x="10.600" y="7.250" width="3.300" height="1" fill="#87939a"/><g transform="translate(5.2 8.4) scale(0.62)"><text x=".300" y="13.100" font-family="Liberation Sans,sans-serif" font-weight="bold" font-style="italic" font-size="18.300" textLength="15" lengthAdjust="spacingAndGlyphs" fill="#40b6e0" stroke="#40b6e0" stroke-width="0.06">m</text></g></svg>
<svg style="left:1500.3px;top:477.5px;" width="30" height="30" viewBox="0 0 16 16"><path d="M5.700 3.700l4.400 4.300-4.400 4.300" stroke="#afb1b3" stroke-width="1.150" fill="none"/></svg>
<span id="t58" class="t" style="left:1579.00px;top:479px;color:#bbbbbb;font-size:22px;letter-spacing:0.520px;">deploy</span>
<span id="t59" class="t" style="left:1653.00px;top:479px;color:#7d7e7f;font-size:22px;letter-spacing:0.318px;">(org.apache.maven.plugins:maven-deploy-plugin:2.7)</span>
<svg style="left:1545.0px;top:516.5px;" width="30" height="30" viewBox="0 0 16 16"><path d="M4.300 3.900C1.600 4.300 .500 6.500 .500 8.700C.500 11.600 2.300 14 4.800 14.600" stroke="#87939a" stroke-width=".850" fill="none"/><path fill="#87939a" d="M6.200 1.400H9.800V9.300H6.200Q4.050 9.300 4.050 7.200V3.500Q4.050 1.400 6.200 1.400z"/><rect x="10.600" y="2.300" width="3.300" height="1.050" fill="#87939a"/><rect x="10.600" y="7.250" width="3.300" height="1" fill="#87939a"/><g transform="translate(5.2 8.4) scale(0.62)"><text x=".300" y="13.100" font-family="Liberation Sans,sans-serif" font-weight="bold" font-style="italic" font-size="18.300" textLength="15" lengthAdjust="spacingAndGlyphs" fill="#40b6e0" stroke="#40b6e0" stroke-width="0.06">m</text></g></svg>
<svg style="left:1500.3px;top:515.0px;" width="30" height="30" viewBox="0 0 16 16"><path d="M5.700 3.700l4.400 4.300-4.400 4.300" stroke="#afb1b3" stroke-width="1.150" fill="none"/></svg>
<span id="t60" class="t" style="left:1579.00px;top:516px;color:#bbbbbb;font-size:22px;letter-spacing:0.833px;">install</span>
<span id="t61" class="t" style="left:1645.60px;top:516px;color:#7d7e7f;font-size:22px;letter-spacing:0.348px;">(org.apache.maven.plugins:maven-install-plugin:2.4)</span>
<svg style="left:1545.0px;top:554.0px;" width="30" height="30" viewBox="0 0 16 16"><path d="M4.300 3.900C1.600 4.300 .500 6.500 .500 8.700C.500 11.600 2.300 14 4.800 14.600" stroke="#87939a" stroke-width=".850" fill="none"/><path fill="#87939a" d="M6.200 1.400H9.800V9.300H6.200Q4.050 9.300 4.050 7.200V3.500Q4.050 1.400 6.200 1.400z"/><rect x="10.600" y="2.300" width="3.300" height="1.050" fill="#87939a"/><rect x="10.600" y="7.250" width="3.300" height="1" fill="#87939a"/><g transform="translate(5.2 8.4) scale(0.62)"><text x=".300" y="13.100" font-family="Liberation Sans,sans-serif" font-weight="bold" font-style="italic" font-size="18.300" textLength="15" lengthAdjust="spacingAndGlyphs" fill="#40b6e0" stroke="#40b6e0" stroke-width="0.06">m</text></g></svg>
<svg style="left:1500.3px;top:552.5px;" width="30" height="30" viewBox="0 0 16 16"><path d="M5.700 3.700l4.400 4.300-4.400 4.300" stroke="#afb1b3" stroke-width="1.150" fill="none"/></svg>
<span id="t62" class="t" style="left:1581.00px;top:554px;color:#bbbbbb;font-size:22px;letter-spacing:-0.100px;">jar</span>
<span id="t63" class="t" style="left:1610.70px;top:554px;color:#7d7e7f;font-size:22px;letter-spacing:0.311px;">(org.apache.maven.plugins:maven-jar-plugin:2.4)</span>
<svg style="left:1545.0px;top:591.5px;" width="30" height="30" viewBox="0 0 16 16"><path d="M4.300 3.900C1.600 4.300 .500 6.500 .500 8.700C.500 11.600 2.300 14 4.800 14.600" stroke="#87939a" stroke-width=".850" fill="none"/><path fill="#87939a" d="M6.200 1.400H9.800V9.300H6.200Q4.050 9.300 4.050 7.200V3.500Q4.050 1.400 6.200 1.400z"/><rect x="10.600" y="2.300" width="3.300" height="1.050" fill="#87939a"/><rect x="10.600" y="7.250" width="3.300" height="1" fill="#87939a"/><g transform="translate(5.2 8.4) scale(0.62)"><text x=".300" y="13.100" font-family="Liberation Sans,sans-serif" font-weight="bold" font-style="italic" font-size="18.300" textLength="15" lengthAdjust="spacingAndGlyphs" fill="#40b6e0" stroke="#40b6e0" stroke-width="0.06">m</text></g></svg>
<svg style="left:1500.3px;top:590.0px;" width="30" height="30" viewBox="0 0 16 16"><path d="M3.700 5.800l4.300 4.400 4.300-4.400" stroke="#afb1b3" stroke-width="1.150" fill="none"/></svg>
<span id="t64" class="t" style="left:1579.00px;top:592px;color:#bbbbbb;font-size:22px;letter-spacing:0.644px;">mybatis-generator</span>
<span id="t65" class="t" style="left:1772.60px;top:592px;color:#7d7e7f;font-size:22px;width:419.4000000000001px;overflow:hidden;letter-spacing:0.326px;">(org.mybatis.generator:mybatis-generator-maven-plugin:1.3.2)</span>
<svg style="left:1578px;top:629.0px;" width="30" height="30" viewBox="0 0 16 16"><g transform="translate(-0.6 -0.3) scale(1.05)"><text x=".300" y="13.100" font-family="Liberation Sans,sans-serif" font-weight="bold" font-style="italic" font-size="18.300" textLength="15" lengthAdjust="spacingAndGlyphs" fill="#3390b3" stroke="#3390b3" stroke-width="0.08">m</text></g><path fill="#9aa7b0" stroke="#0d293e" stroke-width=".800" d="M10.600 10.100H13.200V16H10.600Q9.050 16 9.050 14.400V11.700Q9.050 10.100 10.600 10.100z"/><rect x="13.900" y="11" width="2.100" height=".950" fill="#9aa7b0"/><rect x="13.900" y="13.950" width="2.100" height=".950" fill="#9aa7b0"/></svg>
<span id="t66" class="t" style="left:1614.30px;top:629px;color:#bbbbbb;font-size:22px;letter-spacing:0.488px;">mybatis-generator:generate</span>
<svg style="left:1545.0px;top:666.5px;" width="30" height="30" viewBox="0 0 16 16"><path d="M4.300 3.900C1.600 4.300 .500 6.500 .500 8.700C.500 11.600 2.300 14 4.800 14.600" stroke="#87939a" stroke-width=".850" fill="none"/><path fill="#87939a" d="M6.200 1.400H9.800V9.300H6.200Q4.050 9.300 4.050 7.200V3.500Q4.050 1.400 6.200 1.400z"/><rect x="10.600" y="2.300" width="3.300" height="1.050" fill="#87939a"/><rect x="10.600" y="7.250" width="3.300" height="1" fill="#87939a"/><g transform="translate(5.2 8.4) scale(0.62)"><text x=".300" y="13.100" font-family="Liberation Sans,sans-serif" font-weight="bold" font-style="italic" font-size="18.300" textLength="15" lengthAdjust="spacingAndGlyphs" fill="#40b6e0" stroke="#40b6e0" stroke-width="0.06">m</text></g></svg>
<svg style="left:1500.3px;top:665.0px;" width="30" height="30" viewBox="0 0 16 16"><path d="M5.700 3.700l4.400 4.300-4.400 4.300" stroke="#afb1b3" stroke-width="1.150" fill="none"/></svg>
<span id="t67" class="t" style="left:1579.00px;top:666px;color:#bbbbbb;font-size:22px;letter-spacing:0.050px;">resources</span>
<span id="t68" class="t" style="left:1681.60px;top:666px;color:#7d7e7f;font-size:22px;width:510.4000000000001px;overflow:hidden;letter-spacing:0.298px;">(org.apache.maven.plugins:maven-resources-plugin:2.6)</span>
<svg style="left:1545.0px;top:704.0px;" width="30" height="30" viewBox="0 0 16 16"><path d="M4.300 3.900C1.600 4.300 .500 6.500 .500 8.700C.500 11.600 2.300 14 4.800 14.600" stroke="#87939a" stroke-width=".850" fill="none"/><path fill="#87939a" d="M6.200 1.400H9.800V9.300H6.200Q4.050 9.300 4.050 7.200V3.500Q4.050 1.400 6.200 1.400z"/><rect x="10.600" y="2.300" width="3.300" height="1.050" fill="#87939a"/><rect x="10.600" y="7.250" width="3.300" height="1" fill="#87939a"/><g transform="translate(5.2 8.4) scale(0.62)"><text x=".300" y="13.100" font-family="Liberation Sans,sans-serif" font-weight="bold" font-style="italic" font-size="18.300" textLength="15" lengthAdjust="spacingAndGlyphs" fill="#40b6e0" stroke="#40b6e0" stroke-width="0.06">m</text></g></svg>
<svg style="left:1500.3px;top:702.5px;" width="30" height="30" viewBox="0 0 16 16"><path d="M5.700 3.700l4.400 4.300-4.400 4.300" stroke="#afb1b3" stroke-width="1.150" fill="none"/></svg>
<span id="t69" class="t" style="left:1579.00px;top:704px;color:#bbbbbb;font-size:22px;letter-spacing:0.533px;">site</span>
<span id="t70" class="t" style="left:1621.00px;top:704px;color:#7d7e7f;font-size:22px;letter-spacing:0.298px;">(org.apache.maven.plugins:maven-site-plugin:3.3)</span>
<svg style="left:1545.0px;top:741.5px;" width="30" height="30" viewBox="0 0 16 16"><path d="M4.300 3.900C1.600 4.300 .500 6.500 .500 8.700C.500 11.600 2.300 14 4.800 14.600" stroke="#87939a" stroke-width=".850" fill="none"/><path fill="#87939a" d="M6.200 1.400H9.800V9.300H6.200Q4.050 9.300 4.050 7.200V3.500Q4.050 1.400 6.200 1.400z"/><rect x="10.600" y="2.300" width="3.300" height="1.050" fill="#87939a"/><rect x="10.600" y="7.250" width="3.300" height="1" fill="#87939a"/><g transform="translate(5.2 8.4) scale(0.62)"><text x=".300" y="13.100" font-family="Liberation Sans,sans-serif" font-weight="bold" font-style="italic" font-size="18.300" textLength="15" lengthAdjust="spacingAndGlyphs" fill="#40b6e0" stroke="#40b6e0" stroke-width="0.06">m</text></g></svg>
<svg style="left:1500.3px;top:740.0px;" width="30" height="30" viewBox="0 0 16 16"><path d="M5.700 3.700l4.400 4.300-4.400 4.300" stroke="#afb1b3" stroke-width="1.150" fill="none"/></svg>
<span id="t71" class="t" style="left:1579.00px;top:742px;color:#bbbbbb;font-size:22px;letter-spacing:0.371px;">surefire</span>
<span id="t72" class="t" style="left:1661.00px;top:742px;color:#7d7e7f;font-size:22px;width:531px;overflow:hidden;letter-spacing:0.286px;">(org.apache.maven.plugins:maven-surefire-plugin:2.12.4)</span>
<div style="left:1435.300px;top:585px;width:728.800px;height:106.900px;border:5px solid #fb1e12;border-radius:3.500px;box-sizing:content-box"></div>
<div style="left:1636.300px;top:175.900px;width:113.800px;height:110.100px;border:5px solid #fb1e12;border-radius:3.500px;box-sizing:content-box"></div>
<div style="left:1431px;top:1167px;width:591px;height:16.5px;background:#5a5c5e;"></div>
<div style="left:2192px;top:142px;width:2px;height:1046px;background:#2f3133;"></div>
<div style="left:2194px;top:296.6px;width:38px;height:131.3px;background:#2b2d2e;"></div>
<div style="left:32px;top:1186.2px;width:2160px;height:1.8px;background:#323232;"></div>
<svg style="left:2201.5px;top:158.5px;" width="22" height="24" viewBox="0 0 22 24"><g fill="#a8aaac"><ellipse cx="11" cy="4.300" rx="10.500" ry="3.900"/><path d="M.500 7.300c1.500 1.800 5.500 3 10.500 3s9-1.200 10.500-3v3.100c-1.500 1.800-5.500 3-10.500 3S2 12.200 .500 10.400zM.500 12.300c1.500 1.800 5.500 3 10.500 3s9-1.200 10.500-3v3.100c-1.500 1.800-5.500 3-10.500 3S2 17.200 .500 15.400zM.500 17.300c1.500 1.800 5.500 3 10.500 3s9-1.200 10.500-3v3c-1.500 1.900-5.500 3.100-10.500 3.100S2 22.200 .500 20.300z"/></g></svg>
<span id="t73" class="t" style="left:2228.3px;top:190.70px;transform-origin:0 0;transform:rotate(90deg);color:#bbbbbb;font-size:20px;letter-spacing:0.157px;">Database</span>
<svg style="left:2198px;top:311px;" width="28" height="28" viewBox="0 0 16 16"><g transform="translate(0 0) scale(1)"><text x=".300" y="13.100" font-family="Liberation Sans,sans-serif" font-weight="bold" font-style="italic" font-size="18.300" textLength="15" lengthAdjust="spacingAndGlyphs" fill="#a8aaac" stroke="#a8aaac" stroke-width="0.06">m</text></g></svg>
<span id="t74" class="t" style="left:2228.3px;top:346.70px;transform-origin:0 0;transform:rotate(90deg);color:#ffffff;font-size:20px;letter-spacing:1.125px;">Maven</span>
</body></html>
